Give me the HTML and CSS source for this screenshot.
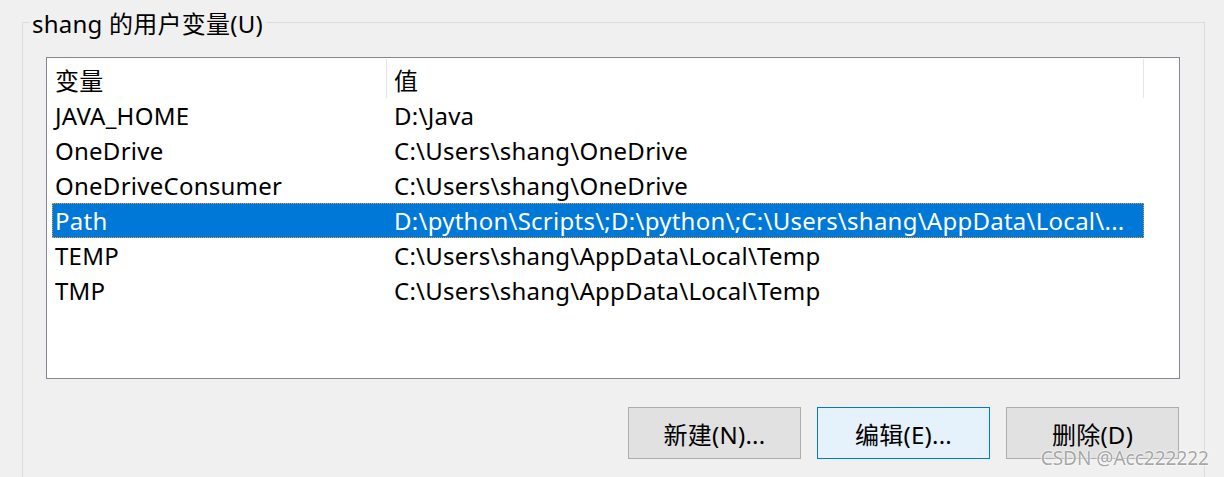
FILE: index.html
```html
<!DOCTYPE html>
<html lang="zh-CN">
<head>
<meta charset="utf-8">
<title>用户变量</title>
<link rel="stylesheet" href="styles.css">
</head>
<body>
<fieldset class="group">
  <legend class="group-label">shang 的用户变量(U)</legend>
  <div class="listbox">
    <div class="list-header">
      <div class="hcell hcell-name">变量</div>
      <div class="hcell hcell-value">值</div>
    </div>
    <div class="list-rows">
      <div class="row"><span class="cell-name">JAVA_HOME</span><span class="cell-value">D:\Java</span></div>
      <div class="row"><span class="cell-name">OneDrive</span><span class="cell-value">C:\Users\shang\OneDrive</span></div>
      <div class="row"><span class="cell-name">OneDriveConsumer</span><span class="cell-value">C:\Users\shang\OneDrive</span></div>
      <div class="row row-selected"><span class="cell-name">Path</span><span class="cell-value">D:\python\Scripts\;D:\python\;C:\Users\shang\AppData\Local\...</span></div>
      <div class="row"><span class="cell-name">TEMP</span><span class="cell-value">C:\Users\shang\AppData\Local\Temp</span></div>
      <div class="row"><span class="cell-name">TMP</span><span class="cell-value">C:\Users\shang\AppData\Local\Temp</span></div>
    </div>
  </div>
  <div class="buttons">
    <button class="btn" type="button">新建(N)...</button>
    <button class="btn btn-focus" type="button">编辑(E)...</button>
    <button class="btn" type="button">删除(D)</button>
  </div>
</fieldset>
<div class="watermark">CSDN @Acc222222</div>
</body>
</html>
```
FILE: styles.css
```css
html, body {
  margin: 0;
  padding: 0;
}
body {
  width: 1224px;
  height: 477px;
  overflow: hidden;
  background: #f0f0f0;
  font-family: "Noto Sans", "Noto Sans CJK SC", sans-serif;
  font-size: 24px;
  letter-spacing: 0.25px;
  color: #000;
  position: relative;
}
.group {
  margin: 6px 19px 0 22px;
  padding: 0 24px 18px 23px;
  border: 1px solid #dcdcdc;
  border-bottom: none;
  min-inline-size: 0;
}
.group-label {
  margin-left: -16px;
  padding: 4px 3px 0 2px;
  line-height: 28px;
}
.listbox {
  margin-top: 19px;
  height: 320px;
  border: 1px solid #828790;
  background: #fff;
}
.list-header {
  display: flex;
  height: 40px;
}
.hcell {
  margin-top: 1px;
  height: 39px;
  padding-top: 2px;
  line-height: 39px;
  border-right: 1px solid #e5e5e5;
  box-sizing: border-box;
}
.hcell-name {
  width: 340px;
  padding-left: 8px;
}
.hcell-value {
  width: 757px;
  padding-left: 7px;
}
.list-rows {
  padding-left: 5px;
}
.row {
  display: grid;
  grid-template-columns: 342px 1fr;
  width: 1092px;
  height: 35px;
  line-height: 35px;
  white-space: nowrap;
  box-sizing: border-box;
}
.cell-name {
  padding-left: 3px;
}
.row-selected {
  background: #0078d7;
  color: #fff;
  outline: 1px dotted #f29a3a;
  outline-offset: -1px;
}
.buttons {
  display: flex;
  justify-content: flex-end;
  gap: 16px;
  margin-top: 28px;
  margin-right: 1px;
}
.btn {
  width: 173px;
  height: 52px;
  background: #e1e1e1;
  border: 1px solid #adadad;
  font: inherit;
  letter-spacing: inherit;
  color: #000;
  padding: 0;
}
.btn-focus {
  background: #e5f1fb;
  border-color: #0078d7;
}
.watermark {
  position: absolute;
  right: 15px;
  bottom: 6px;
  font-size: 19px;
  letter-spacing: 0;
  color: rgba(150, 150, 150, 0.85);
  text-shadow: 0 0 2px #fff, 0 0 2px #fff;
}
```
